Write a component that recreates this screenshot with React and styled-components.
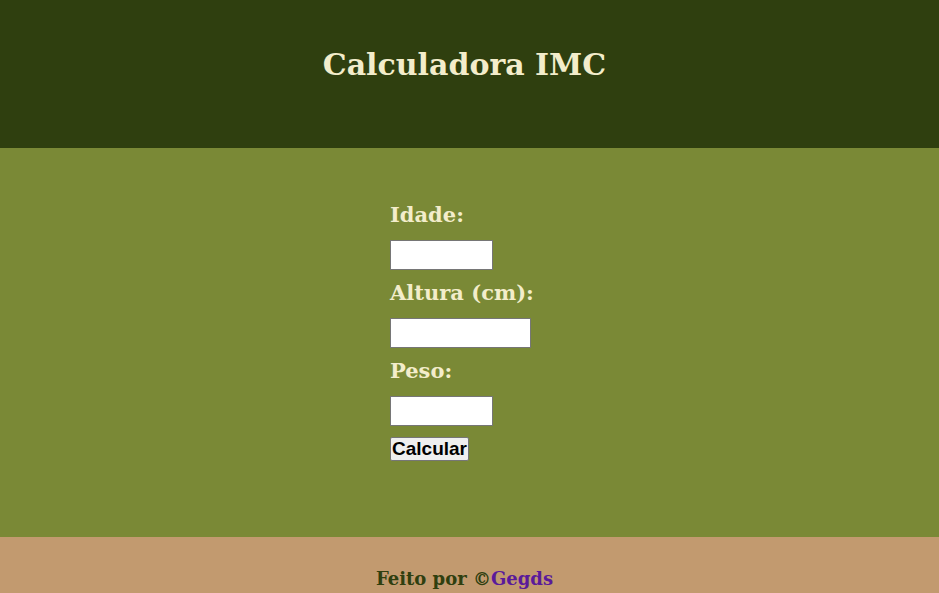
import React from 'react';
import styled, { createGlobalStyle } from 'styled-components';

const GlobalStyle = createGlobalStyle`
  html, body {
    margin: 0;
    padding: 0;
    background: #c29a6f;
  }
  body {
    font-family: "DejaVu Serif", serif;
  }
`;

export default function App() {
  return (
    <>
      <GlobalStyle />
      <Header>
        <Title>Calculadora IMC</Title>
      </Header>
      <Main>
        <Form onSubmit={(e) => e.preventDefault()}>
          <Label htmlFor="idade">Idade:</Label>
          <Input id="idade" type="text" $width={103} />
          <Label htmlFor="altura">Altura (cm):</Label>
          <Input id="altura" type="text" $width={141} />
          <Label htmlFor="peso">Peso:</Label>
          <Input id="peso" type="text" $width={103} />
          <Button type="submit">Calcular</Button>
        </Form>
      </Main>
      <Footer>
        Feito por ©<FooterLink href="#">Gegds</FooterLink>
      </Footer>
    </>
  );
}

const Header = styled.header`
  background: #2f3f0f;
  height: 148px;
  display: flex;
  justify-content: center;
  padding: 46px 10px 0 0;
  box-sizing: border-box;
`;

const Title = styled.h1`
  margin: 0;
  color: #f3edcb;
  font-size: 30px;
  font-weight: bold;
  line-height: 38px;
`;

const Main = styled.main`
  background: #7a8936;
  height: 389px;
  box-sizing: border-box;
  display: flex;
  justify-content: center;
  padding-top: 54px;
`;

const Form = styled.form`
  width: 159px;
  display: flex;
  flex-direction: column;
  align-items: flex-start;
`;

const Label = styled.label`
  color: #f3edcb;
  font-size: 21px;
  font-weight: bold;
  line-height: 26px;
  margin-bottom: 12px;
  white-space: nowrap;
`;

const Input = styled.input`
  width: ${(p) => p.$width}px;
  height: 30px;
  box-sizing: border-box;
  border: 1px solid #767676;
  background: #fff;
  margin: 0 0 10px;
  padding: 0;
`;

const Button = styled.button`
  font-family: "Liberation Sans", Arial, sans-serif;
  font-size: 19px;
  font-weight: bold;
  color: #000;
  background: #efefef;
  border: 1px solid #767676;
  border-radius: 2px;
  padding: 0 1px;
  height: 24px;
  line-height: 20px;
  margin-top: 1px;
`;

const Footer = styled.footer`
  background: #c29a6f;
  height: 56px;
  display: flex;
  justify-content: center;
  align-items: flex-end;
  padding: 0 10px 4px 0;
  box-sizing: border-box;
  color: #2f3f0f;
  font-size: 18px;
  font-weight: bold;
`;

const FooterLink = styled.a`
  color: #5a1a9a;
  text-decoration: none;
`;
